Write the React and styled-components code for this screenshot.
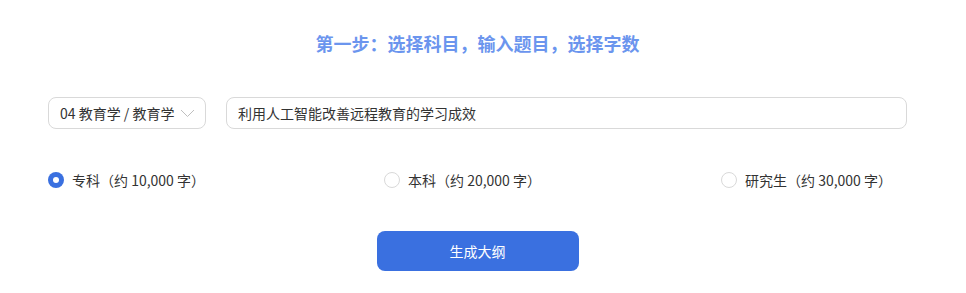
import { useState } from "react";
import styled, { createGlobalStyle } from "styled-components";

const GlobalStyle = createGlobalStyle`
  body {
    margin: 0;
    background: #fff;
    font-family: "Noto Sans CJK SC", "Noto Sans", sans-serif;
    color: #333;
  }
`;

const Page = styled.div`
  width: 966px;
  height: 293px;
  box-sizing: border-box;
  padding: 29px 59px 0 48px;
`;

const Title = styled.h2`
  margin: 0;
  text-align: center;
  font-size: 18px;
  line-height: 28px;
  font-weight: 700;
  color: #6b95ee;
`;

const InputRow = styled.div`
  display: flex;
  gap: 20px;
  margin-top: 40px;
`;

const Select = styled.div`
  width: 158px;
  height: 32px;
  box-sizing: border-box;
  border: 1px solid #d9d9d9;
  border-radius: 8px;
  display: flex;
  align-items: center;
  justify-content: space-between;
  padding: 0 10px 0 11px;
  font-size: 14px;
  color: #333;
  flex-shrink: 0;
`;

const TextInput = styled.input`
  flex: 1;
  height: 32px;
  box-sizing: border-box;
  border: 1px solid #d9d9d9;
  border-radius: 8px;
  padding: 0 11px;
  font-family: inherit;
  font-size: 14px;
  color: #333;
  outline: none;
`;

const RadioRow = styled.div`
  display: grid;
  grid-template-columns: 336px 337px auto;
  margin-top: 40px;
  height: 22px;
  align-items: center;
`;

const RadioItem = styled.label`
  display: flex;
  align-items: center;
  gap: 8px;
  font-size: 14px;
  color: #333;
  cursor: pointer;
  white-space: nowrap;
`;

const Dot = styled.span`
  width: 16px;
  height: 16px;
  box-sizing: border-box;
  border-radius: 50%;
  border: ${(p) => (p.checked ? "none" : "1px solid #d9d9d9")};
  background: ${(p) => (p.checked ? "#3a70e0" : "#fff")};
  display: flex;
  align-items: center;
  justify-content: center;
  &::after {
    content: "";
    width: 6px;
    height: 6px;
    border-radius: 50%;
    background: #fff;
    display: ${(p) => (p.checked ? "block" : "none")};
  }
`;

const ButtonRow = styled.div`
  display: flex;
  justify-content: center;
  margin-top: 40px;
`;

const Button = styled.button`
  width: 202px;
  height: 40px;
  border: none;
  border-radius: 8px;
  background: #3a70e0;
  color: #fff;
  font-family: inherit;
  font-size: 14px;
  cursor: pointer;
`;

const levels = [
  { key: "zk", label: "专科（约 10,000 字）" },
  { key: "bk", label: "本科（约 20,000 字）" },
  { key: "yjs", label: "研究生（约 30,000 字）" },
];

const App = () => {
  const [level, setLevel] = useState("zk");

  return (
    <Page>
      <GlobalStyle />
      <Title>第一步：选择科目，输入题目，选择字数</Title>
      <InputRow>
        <Select>
          <span>04 教育学 / 教育学</span>
          <svg width="15" height="10" viewBox="0 0 15 10" fill="none">
            <path d="M1 2 L7.5 8.5 L14 2" stroke="#bfbfbf" strokeWidth="1" />
          </svg>
        </Select>
        <TextInput defaultValue="利用人工智能改善远程教育的学习成效" />
      </InputRow>
      <RadioRow>
        {levels.map((l) => (
          <RadioItem key={l.key} onClick={() => setLevel(l.key)}>
            <Dot checked={level === l.key} />
            {l.label}
          </RadioItem>
        ))}
      </RadioRow>
      <ButtonRow>
        <Button>生成大纲</Button>
      </ButtonRow>
    </Page>
  );
};

export default App;
